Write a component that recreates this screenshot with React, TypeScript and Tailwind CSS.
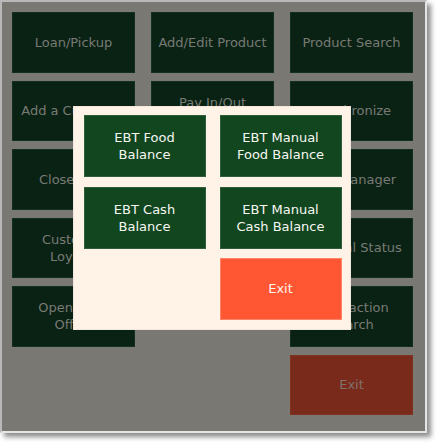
import React from "react";

const font = { fontFamily: '"DejaVu Sans", "Liberation Sans", sans-serif' };

type B = { lines: string[]; col?: string; red?: boolean };

const buttons: B[] = [
  { lines: ["Loan/Pickup"] },
  { lines: ["Add/Edit Product"] },
  { lines: ["Product Search"] },
  { lines: ["Add a Customer"] },
  { lines: ["Pay In/Out", "Report"] },
  { lines: ["Synchronize"] },
  { lines: ["Close Shift"] },
  { lines: ["Price Book"] },
  { lines: ["Task Manager"] },
  { lines: ["Customer", "Loyalty"] },
  { lines: ["Reports"] },
  { lines: ["Terminal Status"] },
  { lines: ["Open Back", "Office"] },
  { lines: ["Transaction", "Search"], col: "col-start-3" },
  { lines: ["Exit"], col: "col-start-3", red: true },
];

export default function App() {
  return (
    <div className="w-[442px] h-[448px] bg-white relative overflow-hidden" style={font}>
      <div className="w-[427px] h-[433px] border-2 border-t-[#b9b9b9] border-l-[#b9b9b9] border-r-[#e4e4e4] border-b-[#e4e4e4] bg-[#7a7873] shadow-[4px_4px_5px_rgba(0,0,0,0.45)] pl-[10px] pt-[10px]">
        <div className="grid grid-cols-[123px_123px_123px] auto-rows-[60.5px] gap-x-[16px] gap-y-[8px]">
          {buttons.map((b, i) => (
            <div
              key={i}
              className={`${b.col ?? ""} flex flex-col items-center justify-center text-center text-[13px] leading-[17px] whitespace-nowrap border ${
                b.red
                  ? "bg-[#7a2a1b] border-[#80321f] text-[#7f716b]"
                  : "bg-[#0a2214] border-[#13301c] text-[#787a74]"
              }`}
            >
              {b.lines.map((l) => (
                <span key={l}>{l}</span>
              ))}
            </div>
          ))}
        </div>
      </div>

      <div className="absolute left-[72.5px] top-[106px] w-[278px] h-[223.5px] bg-[#fff2e6] border border-[#f3e6da] pl-[10px] pr-[8px] pt-[8px]">
        <div className="grid grid-cols-[122px_122px] auto-rows-[62px] gap-x-[14px] gap-y-[9.5px]">
          {[
            ["EBT Food", "Balance"],
            ["EBT Manual", "Food Balance"],
            ["EBT Cash", "Balance"],
            ["EBT Manual", "Cash Balance"],
          ].map((lines, i) => (
            <div
              key={i}
              className="bg-[#11461f] border border-[#2d5d39] flex flex-col items-center justify-center text-center text-[13px] leading-[17px] text-[#f7f7f2] whitespace-nowrap"
            >
              {lines.map((l) => (
                <span key={l}>{l}</span>
              ))}
            </div>
          ))}
          <div className="col-start-2 bg-[#ff5733] border border-[#ff8566] flex items-center justify-center text-[13px] text-[#fff4ee]">
            Exit
          </div>
        </div>
      </div>
    </div>
  );
}
